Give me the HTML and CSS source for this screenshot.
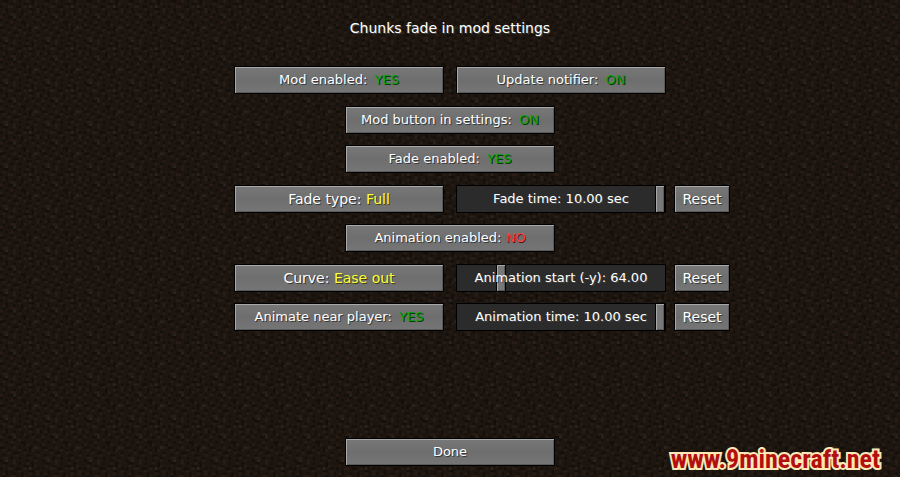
FILE: index.html
```html
<!DOCTYPE html>
<html lang="en">
<head>
    <meta charset="UTF-8">
    <meta name="viewport" content="width=device-width, initial-scale=1.0">
    <title>Chunks fade in mod settings</title>
    <link rel="stylesheet" href="styles.css">
</head>
<body>
    <main class="screen">
        <h1>Chunks fade in mod settings</h1>

        <div class="options">
            <div class="row">
                <div class="pair">
                    <button class="btn toggle">Mod enabled: <span class="on">YES</span></button>
                    <button class="btn toggle">Update notifier: <span class="on">ON</span></button>
                </div>
            </div>
            <div class="row">
                <div class="pair">
                    <button class="btn toggle">Mod button in settings: <span class="on">ON</span></button>
                </div>
            </div>
            <div class="row">
                <div class="pair">
                    <button class="btn toggle">Fade enabled: <span class="on">YES</span></button>
                </div>
            </div>
            <div class="row">
                <div class="pair">
                    <button class="btn">Fade type: <span class="mode">Full</span></button>
                    <div class="slider">
                        <input type="range" id="fade-time" min="0" max="10" step="0.01" value="10">
                        <label for="fade-time">Fade time: 10.00 sec</label>
                    </div>
                </div>
                <button class="btn reset">Reset</button>
            </div>
            <div class="row">
                <div class="pair">
                    <button class="btn toggle">Animation enabled: <span class="off">NO</span></button>
                </div>
            </div>
            <div class="row">
                <div class="pair">
                    <button class="btn">Curve: <span class="mode">Ease out</span></button>
                    <div class="slider">
                        <input type="range" id="animation-start" min="1" max="320" value="64">
                        <label for="animation-start">Animation start (-y): 64.00</label>
                    </div>
                </div>
                <button class="btn reset">Reset</button>
            </div>
            <div class="row">
                <div class="pair">
                    <button class="btn toggle">Animate near player: <span class="on">YES</span></button>
                    <div class="slider">
                        <input type="range" id="animation-time" min="0" max="10" step="0.01" value="10">
                        <label for="animation-time">Animation time: 10.00 sec</label>
                    </div>
                </div>
                <button class="btn reset">Reset</button>
            </div>
        </div>

        <button class="btn toggle">Done</button>
    </main>
    <a class="watermark" href="#">www.9minecraft.net</a>
</body>
</html>
```
FILE: styles.css
```css
* {
    margin: 0;
    padding: 0;
    box-sizing: border-box;
}

body {
    min-height: 100vh;
    color: #fff;
    font-family: "DejaVu Sans", sans-serif;
    font-size: 14px;
    line-height: 16px;
    text-shadow: 1px 1px 0 #444;
    /* dirt tile, 16x16 */
    background: #1d150f url("data:image/svg+xml,%3Csvg xmlns='http://www.w3.org/2000/svg' viewBox='0 0 16 16' width='42' height='42'%3E%3Cpath stroke='%23150f0a' d='M1 .5h2M7 .5h1M12 .5h1M12 1.5h1M4 1.5h1M9 1.5h2M0 2.5h1M6 2.5h2M14 2.5h1M2 3.5h1M2 4.5h1M11 3.5h2M5 4.5h1M8 4.5h1M8 5.5h1M15 4.5h1M1 5.5h1M12 5.5h1M3 6.5h2M7 6.5h1M10 6.5h1M14 6.5h1M0 7.5h1M5 7.5h1M2 8.5h1M8 8.5h2M9 9.5h1M13 8.5h1M4 9.5h1M15 9.5h1M0 10.5h2M7 10.5h1M11 10.5h1M11 11.5h1M3 11.5h1M9 11.5h1M5 12.5h2M14 12.5h1M1 13.5h1M10 13.5h2M4 14.5h1M7 14.5h1M13 14.5h1M0 15.5h1M10 15.5h1'/%3E%3Cpath stroke='%23281c14' d='M5 .5h1M10 .5h1M1 1.5h1M13 1.5h1M3 2.5h2M9 2.5h1M7 3.5h1M14 3.5h1M14 4.5h1M1 4.5h1M11 4.5h1M4 5.5h2M9 5.5h1M0 6.5h1M12 6.5h1M7 7.5h1M14 7.5h1M4 8.5h1M0 9.5h1M10 9.5h1M5 10.5h1M14 10.5h1M1 11.5h1M7 11.5h1M12 11.5h1M3 12.5h1M9 12.5h1M6 13.5h1M14 13.5h1M1 14.5h2M11 14.5h1M5 15.5h1M13 15.5h1'/%3E%3Cpath stroke='%23292420' d='M11 2.5h1M5 6.5h1M13 10.5h1M2 15.5h1'/%3E%3C/svg%3E") 0 0 / 42px 42px;
}

.screen {
    min-height: 100vh;
    padding: 20px 16px 11px;
    display: flex;
    flex-direction: column;
    align-items: center;
}

h1 {
    font-size: 14px;
    font-weight: normal;
    line-height: 16px;
    text-align: center;
}

.options {
    width: 100%;
    flex: 1;
    margin: 30px 0 107px;
    display: flex;
    flex-direction: column;
    justify-content: space-between;
}

/* the reset button hangs to the right of the centred pair */
.row {
    display: grid;
    grid-template-columns: 1fr auto 1fr;
    gap: 8px;
}

.pair {
    grid-column: 2;
    display: flex;
    gap: 12px;
}

.btn,
.slider {
    width: 210px;
    height: 28px;
    border: 1px solid #000;
}

.btn {
    color: #fff;
    font: inherit;
    white-space: nowrap;
    text-shadow: 1px 1px 0 #383838;
    background: linear-gradient(#787878, #6e6e6e 50%, #767676);
    box-shadow: inset 1px 1px 0 #a8a8a8, inset -1px -1px 0 #5a5a5a;
    cursor: pointer;
}

.btn:hover {
    background: #7c86b4;
}

.toggle,
.slider {
    font-size: 13px;
}

.reset {
    width: 56px;
}

.on {
    color: #0a9f0a;
    margin-left: 3px;
    text-shadow: 1px 1px 0 #063c06;
}

.off {
    color: #f44;
    text-shadow: 1px 1px 0 #511;
}

.mode {
    color: #ffff3c;
    text-shadow: 1px 1px 0 #3f3f15;
}

.slider {
    position: relative;
    background: #2b2b2b;
}

.slider input {
    display: block;
    width: 100%;
    height: 100%;
    appearance: none;
    background: none;
    cursor: pointer;
}

.slider input::-webkit-slider-thumb {
    appearance: none;
    width: 10px;
    height: 26px;
    background: #787878;
    border: 1px solid #000;
    border-width: 0 1px;
    box-shadow: inset 1px 1px 0 #a8a8a8, inset -1px -1px 0 #5a5a5a;
}

.slider label {
    position: absolute;
    inset: 0;
    line-height: 26px;
    text-align: center;
    white-space: nowrap;
    pointer-events: none;
}

.watermark {
    position: absolute;
    right: 20px;
    bottom: 4px;
    color: #b30f0f;
    font-family: "Liberation Sans Narrow", "Roboto Condensed", "Open Sans Condensed", "Liberation Sans", sans-serif;
    font-size: 26px;
    font-weight: bold;
    line-height: 28px;
    text-decoration: none;
    text-shadow: none;
    -webkit-text-stroke: 4px #fbe9b8;
    paint-order: stroke fill;
}
```
